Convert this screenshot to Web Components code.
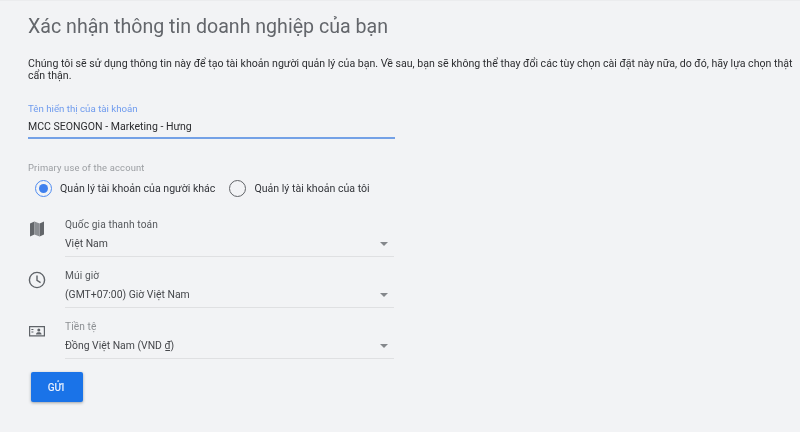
<!DOCTYPE html>
<html lang="vi">
<head>
<meta charset="utf-8">
<style>
  html, body { margin: 0; height: 100%; background: #f2f3f5; }
  body { font-family: Roboto, "Liberation Sans", sans-serif; overflow: hidden; }
</style>
</head>
<body>
<business-form>
  <span slot="title">Xác nhận thông tin doanh nghiệp của bạn</span>
  <span slot="intro">Chúng tôi sẽ sử dụng thông tin này để tạo tài khoản người quản lý của bạn. Về sau, bạn sẽ không thể thay đổi các tùy chọn cài đặt này nữa, do đó, hãy lựa chọn thật cẩn thận.</span>
  <name-field slot="name" label="Tên hiển thị của tài khoản" value="MCC SEONGON - Marketing - Hưng"></name-field>
  <use-choice slot="use" label="Primary use of the account">
    <radio-item checked>Quản lý tài khoản của người khác</radio-item>
    <radio-item>Quản lý tài khoản của tôi</radio-item>
  </use-choice>
  <select-row slot="rows" label="Quốc gia thanh toán" value="Việt Nam">
    <svg slot="icon" width="18" height="18" viewBox="0 0 18 18"><path fill="#63666a" d="M2 3.6 6.4 1.6v13L2 16.4zM11.6 3.4 16 1.6v12.8l-4.4 2z"/><path fill="#8b8e92" d="M6.4 1.6l5.2 1.8v13l-5.2-1.8z"/></svg>
  </select-row>
  <select-row slot="rows" label="Múi giờ" value="(GMT+07:00) Giờ Việt Nam">
    <svg slot="icon" width="18" height="18" viewBox="0 0 18 18" fill="none" stroke="#5f6368" stroke-width="1.4"><circle cx="9" cy="9" r="7.6"/><path d="M9 4.4V9.4l3.6 2.2"/></svg>
  </select-row>
  <select-row slot="rows" label="Tiền tệ" value="Đồng Việt Nam (VND ₫)" faint>
    <svg slot="icon" width="18" height="18" viewBox="0 0 18 18"><path fill="none" stroke="#5f6368" stroke-width="1.2" d="M1.6 4.6h14.8v9.2H1.6z"/><circle cx="10.8" cy="8" r="1.5" fill="#5f6368"/><path fill="#5f6368" d="M8 12.4c0-1.6 1.3-2.2 2.8-2.2s2.8.6 2.8 2.2zM3.4 7h2v1h-2zM3.4 9.6h2v1h-2z"/></svg>
  </select-row>
  <submit-button slot="action">GỬI</submit-button>
</business-form>

<script>
function shadow(el, html) {
  el.attachShadow({ mode: 'open' }).innerHTML = html;
}

class BusinessForm extends HTMLElement {
  connectedCallback() {
    shadow(this, `
      <style>
        :host { display: flex; flex-direction: column; height: 432px; box-sizing: border-box; padding: 14px 0 0 28px; border-top: 1px solid #ebecee; color: #202124; filter: blur(.35px); }
        h1 { margin: 0; font-size: 19.6px; line-height: 24px; font-weight: 400; color: #63666b; }
        p { margin: 19px 0 0; width: 768px; font-size: 10.6px; line-height: 12px; color: #2c2d30; }
        .name { display: block; margin-top: 21px; }
        .use { display: block; margin-top: 23px; }
        .rows { display: flex; flex-direction: column; gap: 12px; margin-top: 21px; }
        .action { margin-top: 13px; }
      </style>
      <h1><slot name="title"></slot></h1>
      <p><slot name="intro"></slot></p>
      <div class="name"><slot name="name"></slot></div>
      <div class="use"><slot name="use"></slot></div>
      <div class="rows"><slot name="rows"></slot></div>
      <div class="action"><slot name="action"></slot></div>
    `);
  }
}

class NameField extends HTMLElement {
  connectedCallback() {
    shadow(this, `
      <style>
        :host { display: block; width: 367px; }
        label { display: block; font-size: 9.7px; line-height: 12px; color: #6f9bee; }
        div { margin-top: 4px; padding-bottom: 3px; font-size: 10.55px; line-height: 15px; color: #2b2c2f; border-bottom: 2px solid #74a1e6; }
      </style>
      <label>${this.getAttribute('label')}</label>
      <div>${this.getAttribute('value')}</div>
    `);
  }
}

class UseChoice extends HTMLElement {
  connectedCallback() {
    shadow(this, `
      <style>
        :host { display: block; }
        .label { font-size: 9.4px; line-height: 12px; color: #9a9da1; letter-spacing: .17px; }
        .options { display: flex; gap: 14px; margin: 6px 0 0 7px; }
      </style>
      <div class="label">${this.getAttribute('label')}</div>
      <div class="options"><slot></slot></div>
    `);
  }
}

class RadioItem extends HTMLElement {
  connectedCallback() {
    const checked = this.hasAttribute('checked');
    shadow(this, `
      <style>
        :host { display: flex; align-items: center; gap: 8px; font-size: 10.6px; line-height: 17px; color: #33353a; }
        .dot { box-sizing: border-box; width: 17px; height: 17px; border: 1.6px solid ${checked ? '#4f8bf0' : '#606367'}; border-radius: 50%; display: flex; align-items: center; justify-content: center; }
        .dot i { width: 9px; height: 9px; border-radius: 50%; background: ${checked ? '#3f80ee' : 'transparent'}; }
      </style>
      <span class="dot"><i></i></span><span><slot></slot></span>
    `);
  }
}

class SelectRow extends HTMLElement {
  connectedCallback() {
    const faint = this.hasAttribute('faint');
    shadow(this, `
      <style>
        :host { display: grid; grid-template-columns: 18px 329px; column-gap: 19px; }
        .icon { padding-top: 2px; line-height: 0; }
        .label { font-size: 10.2px; line-height: 14px; color: ${faint ? '#8d9094' : '#55585c'}; letter-spacing: .1px; }
        .field { display: flex; justify-content: space-between; align-items: center; margin-top: 4px; padding-bottom: 5px; border-bottom: 1px solid #dfe0e2; font-size: 10.4px; line-height: 15px; color: #45474b; }
        .arrow { width: 0; height: 0; margin-right: 6px; border: 4px solid transparent; border-top: 4px solid #84878b; border-bottom: 0; }
      </style>
      <div class="icon"><slot name="icon"></slot></div>
      <div>
        <div class="label">${this.getAttribute('label')}</div>
        <div class="field"><span>${this.getAttribute('value')}</span><i class="arrow"></i></div>
      </div>
    `);
  }
}

class SubmitButton extends HTMLElement {
  connectedCallback() {
    shadow(this, `
      <style>
        :host { display: inline-flex; align-items: center; justify-content: center; box-sizing: border-box; width: 52px; height: 30px; margin-left: 3px; padding-right: 2px; background: #1a73e8; border-radius: 2px; box-shadow: 0 1px 3px rgba(60,64,67,.45); color: #e8f0fe; font-size: 10px; font-weight: 500; }
      </style>
      <slot></slot>
    `);
  }
}

customElements.define('business-form', BusinessForm);
customElements.define('name-field', NameField);
customElements.define('use-choice', UseChoice);
customElements.define('radio-item', RadioItem);
customElements.define('select-row', SelectRow);
customElements.define('submit-button', SubmitButton);
</script>
</body>
</html>
